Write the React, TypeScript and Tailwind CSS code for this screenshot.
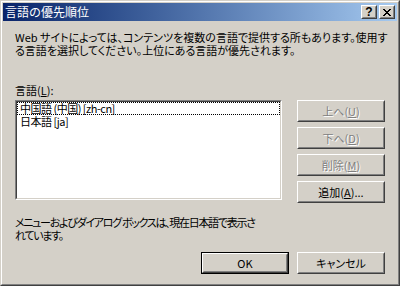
import React from 'react';

const font = "font-['MS_UI_Gothic','Noto_Sans_CJK_JP',sans-serif] [font-feature-settings:'palt']";

function Bevel({ children, className = '' }: { children: React.ReactNode; className?: string }) {
    return (
        <div className={`border border-t-white border-l-white border-b-[#404040] border-r-[#404040] ${className}`}>
            <div className="w-full h-full border border-t-[#d4d0c8] border-l-[#d4d0c8] border-b-[#808080] border-r-[#808080] flex items-center justify-center">
                {children}
            </div>
        </div>
    );
}

function Button({ label, hot, rest, disabled, isDefault }: { label: string; hot: string; rest?: string; disabled?: boolean; isDefault?: boolean }) {
    const text = disabled ? 'text-[#808080] [text-shadow:1px_1px_0_#fff]' : 'text-black';
    const inner = (
        <Bevel className="w-full h-full">
            <span className={`text-[11px] leading-[13px] ${text}`}>
                {label}
                {hot && (
                    <>
                        (<span className="underline underline-offset-1">{hot}</span>)
                    </>
                )}
                {rest}
            </span>
        </Bevel>
    );
    if (isDefault) return <div className="w-[88px] h-[22px] border border-black">{inner}</div>;
    return <div className="w-[88px] h-[22px]">{inner}</div>;
}

export default function App() {
    return (
        <div className={`w-[400px] h-[286px] bg-[#d4d0c8] ${font}`}>
            <div className="w-full h-full border border-t-[#d4d0c8] border-l-[#d4d0c8] border-b-[#404040] border-r-[#404040]">
                <div className="w-full h-full border border-t-white border-l-white border-b-[#808080] border-r-[#808080] p-px flex flex-col">
                    {/* title bar */}
                    <div className="h-[18px] flex items-center bg-gradient-to-r from-[#0a246a] to-[#a6caf0] pl-[2px] pr-[2px]">
                        <div className="flex-1 text-white text-[12px] leading-[14px] [font-feature-settings:normal]">言語の優先順位</div>
                        <div className="flex gap-[2px]">
                            <Bevel className="w-[16px] h-[14px] bg-[#d4d0c8]">
                                <span className="text-black text-[12px] leading-[12px] font-bold font-['Liberation_Sans',sans-serif]">?</span>
                            </Bevel>
                            <Bevel className="w-[16px] h-[14px] bg-[#d4d0c8]">
                                <svg width="8" height="7" viewBox="0 0 8 7" shapeRendering="crispEdges">
                                    <path d="M0 0h2v1H0zM6 0h2v1H6zM1 1h2v1H1zM5 1h2v1H5zM2 2h4v1H2zM3 3h2v1H3zM2 4h4v1H2zM1 5h2v1H1zM5 5h2v1H5zM0 6h2v1H0zM6 6h2v1H6z" fill="#000" />
                                </svg>
                            </Bevel>
                        </div>
                    </div>

                    {/* body */}
                    <div className="flex-1 flex flex-col pl-[12px] pr-[12px] text-[11px] leading-[13px] text-black">
                        <p className="mt-[10px] whitespace-nowrap">
                            Web サイトによっては、コンテンツを複数の言語で提供する所もあります。使用す
                            <br />
                            る言語を選択してください。上位にある言語が優先されます。
                        </p>

                        <div className="mt-[27px]">
                            言語(<span className="underline underline-offset-1">L</span>):
                        </div>

                        <div className="mt-[3px] flex gap-[15px] items-start">
                            <div className="w-[268px] h-[100px] border border-t-[#808080] border-l-[#808080] border-b-white border-r-white">
                                <div className="w-full h-full border border-t-[#404040] border-l-[#404040] border-b-[#d4d0c8] border-r-[#d4d0c8] bg-white [font-feature-settings:normal]">
                                    <div className="h-[13px] border border-dotted border-black pl-[2px] leading-[11px] whitespace-nowrap tracking-[-0.5px]">
                                        中国語 (中国) [zh-cn]
                                    </div>
                                    <div className="h-[13px] pl-[3px] leading-[13px] tracking-[-0.5px]">日本語 [ja]</div>
                                </div>
                            </div>
                            <div className="flex flex-col gap-[5px]">
                                <Button label="上へ" hot="U" disabled />
                                <Button label="下へ" hot="D" disabled />
                                <Button label="削除" hot="M" disabled />
                                <Button label="追加" hot="A" rest="..." />
                            </div>
                        </div>

                        <p className="mt-[13px] whitespace-nowrap tracking-[-1.3px]">
                            メニューおよびダイアログ ボックスは、現在日本語で表示さ
                            <br />
                            れています。
                        </p>

                        <div className="mt-[10px] flex justify-end gap-[8px]">
                            <Button label="OK" hot="" isDefault />
                            <Button label="キャンセル" hot="" />
                        </div>
                    </div>
                </div>
            </div>
        </div>
    );
}
